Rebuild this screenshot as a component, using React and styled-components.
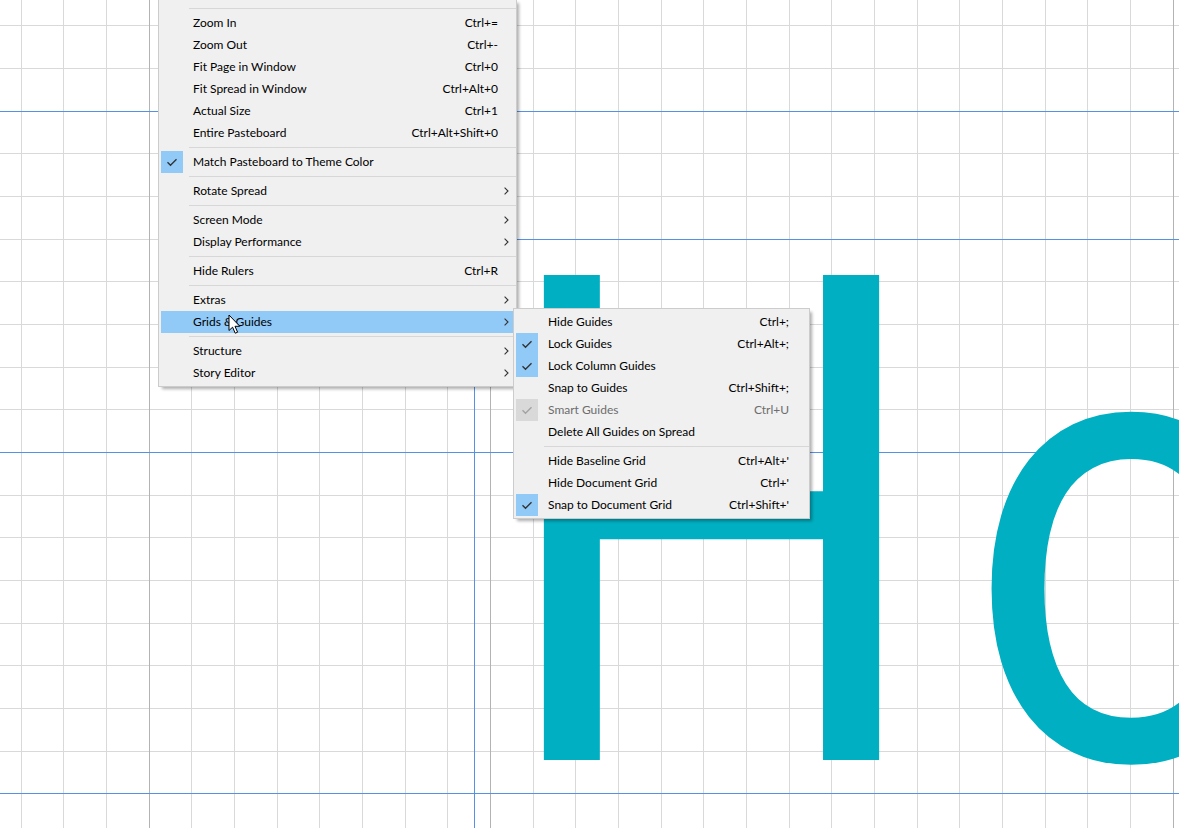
import React from 'react';
import styled, { createGlobalStyle } from 'styled-components';

const GlobalStyle = createGlobalStyle`
  html, body { margin: 0; padding: 0; background: #ffffff; }
  body { overflow: hidden; font-family: "Lato", "Open Sans", sans-serif; }
`;

const Canvas = styled.div`
  position: relative;
  width: 1179px;
  height: 828px;
  overflow: hidden;
  background: #ffffff;
`;

const Drawing = styled.svg`
  position: absolute;
  left: 0;
  top: 0;
`;

const Glyphs = styled.div`
  position: absolute;
  left: ${(p) => p.$x}px;
  top: ${(p) => p.$y}px;
  font-family: "Lato", "Open Sans", sans-serif;
  font-weight: 400;
  font-size: 677px;
  line-height: 1;
  color: #00afc1;
  white-space: nowrap;
  letter-spacing: ${(p) => p.$spacing}px;
  transform: scaleX(${(p) => p.$scale});
  transform-origin: 0 0;
`;

const Menu = styled.div`
  position: absolute;
  left: ${(p) => p.$x}px;
  top: ${(p) => p.$y}px;
  width: ${(p) => p.$w}px;
  box-sizing: border-box;
  background: #f0f0f0;
  border: 1px solid #cccccc;
  padding: ${(p) => p.$padTop}px 2px 2px 2px;
  box-shadow: 3px 3px 3px -1px rgba(0, 0, 0, 0.32);
  font-family: "Lato", "Open Sans", sans-serif;
  font-size: 12px;
  color: #000000;
  z-index: ${(p) => p.$z};
`;

const Item = styled.div`
  display: grid;
  grid-template-columns: 22px 1fr auto ${(p) => p.$arrowCol}px;
  align-items: center;
  height: 22px;
  background: ${(p) => (p.$active ? '#91c9f7' : 'transparent')};
  color: ${(p) => (p.$disabled ? '#6d6d6d' : '#000000')};
`;

const CheckBox = styled.span`
  display: flex;
  align-items: center;
  justify-content: center;
  width: 22px;
  height: 22px;
  background: ${(p) =>
    p.$checked ? (p.$disabled ? '#d9d9d9' : '#91c9f7') : 'transparent'};
`;

const Label = styled.span`
  padding-left: 10px;
  white-space: nowrap;
  line-height: 22px;
`;

const Shortcut = styled.span`
  white-space: nowrap;
  line-height: 22px;
`;

const ArrowCell = styled.span`
  display: flex;
  align-items: center;
  justify-content: center;
  height: 22px;
`;

const Separator = styled.div`
  height: 1px;
  margin: 3px -2px 3px 28px;
  background: #d7d7d7;
`;

const Pointer = styled.svg`
  position: absolute;
  left: 228px;
  top: 314px;
  z-index: 10;
`;

const CheckMark = ({ disabled }) => (
  <svg width="22" height="22" viewBox="0 0 22 22">
    <path
      d="M6.5 11.2 L9.5 14.2 L15.5 8.2"
      fill="none"
      stroke={disabled ? '#a3a3a3' : '#333333'}
      strokeWidth="1.4"
    />
  </svg>
);

const Chevron = () => (
  <svg width="5" height="8" viewBox="0 0 5 8">
    <path d="M0.6 0.6 L4 4 L0.6 7.4" fill="none" stroke="#333333" strokeWidth="1.1" />
  </svg>
);

const viewMenu = [
  { sep: true },
  { label: 'Zoom In', key: 'Ctrl+=' },
  { label: 'Zoom Out', key: 'Ctrl+-' },
  { label: 'Fit Page in Window', key: 'Ctrl+0' },
  { label: 'Fit Spread in Window', key: 'Ctrl+Alt+0' },
  { label: 'Actual Size', key: 'Ctrl+1' },
  { label: 'Entire Pasteboard', key: 'Ctrl+Alt+Shift+0' },
  { sep: true },
  { label: 'Match Pasteboard to Theme Color', checked: true },
  { sep: true },
  { label: 'Rotate Spread', sub: true },
  { sep: true },
  { label: 'Screen Mode', sub: true },
  { label: 'Display Performance', sub: true },
  { sep: true },
  { label: 'Hide Rulers', key: 'Ctrl+R' },
  { sep: true },
  { label: 'Extras', sub: true },
  { label: 'Grids & Guides', sub: true, active: true },
  { sep: true },
  { label: 'Structure', sub: true },
  { label: 'Story Editor', sub: true },
];

const guidesMenu = [
  { label: 'Hide Guides', key: 'Ctrl+;' },
  { label: 'Lock Guides', key: 'Ctrl+Alt+;', checked: true },
  { label: 'Lock Column Guides', checked: true },
  { label: 'Snap to Guides', key: 'Ctrl+Shift+;' },
  { label: 'Smart Guides', key: 'Ctrl+U', checked: true, disabled: true },
  { label: 'Delete All Guides on Spread' },
  { sep: true },
  { label: 'Hide Baseline Grid', key: "Ctrl+Alt+'" },
  { label: 'Hide Document Grid', key: "Ctrl+'" },
  { label: 'Snap to Document Grid', key: "Ctrl+Shift+'", checked: true },
];

const MenuList = ({ items, x, y, w, padTop, arrowCol, z }) => (
  <Menu $x={x} $y={y} $w={w} $padTop={padTop} $z={z}>
    {items.map((it, i) =>
      it.sep ? (
        <Separator key={i} />
      ) : (
        <Item key={i} $arrowCol={arrowCol} $active={it.active} $disabled={it.disabled}>
          <CheckBox $checked={it.checked} $disabled={it.disabled}>
            {it.checked && <CheckMark disabled={it.disabled} />}
          </CheckBox>
          <Label>{it.label}</Label>
          <Shortcut>{it.key || ''}</Shortcut>
          <ArrowCell>{it.sub && <Chevron />}</ArrowCell>
        </Item>
      )
    )}
  </Menu>
);

const W = 1179;
const H = 828;
const STEP = 42.667;
const xs = Array.from({ length: 28 }, (_, k) => Math.round(20.67 + STEP * k) + 0.5);
const ys = Array.from({ length: 20 }, (_, k) => Math.round(25.33 + STEP * k) + 0.5);
const darkCols = [3, 11, 27];

const GridDrawing = () => (
  <Drawing width={W} height={H} viewBox={`0 0 ${W} ${H}`}>
    {ys.map((y) => (
      <line key={'h' + y} x1="0" x2={W} y1={y} y2={y} stroke="#d9d9d9" strokeWidth="1" />
    ))}
    {xs.map((x, k) => (
      <line
        key={'v' + x}
        x1={x}
        x2={x}
        y1="0"
        y2={H}
        stroke={darkCols.includes(k) ? '#b3b3b3' : '#d9d9d9'}
        strokeWidth="1"
      />
    ))}
    <line x1="0" x2={W} y1="111.5" y2="111.5" stroke="#5592e6" strokeWidth="1" />
    <line x1="490" x2={W} y1="239.5" y2="239.5" stroke="#5592e6" strokeWidth="1" />
    <line x1="0" x2={W} y1="452.5" y2="452.5" stroke="#5592e6" strokeWidth="1" />
    <line x1="0" x2={W} y1="793.5" y2="793.5" stroke="#5592e6" strokeWidth="1" />
    <line x1="474.5" x2="474.5" y1="0" y2={H} stroke="#5592e6" strokeWidth="1" />
  </Drawing>
);

export default function App() {
  return (
    <>
      <GlobalStyle />
      <Canvas>
        <GridDrawing />
        <Glyphs $x={491} $y={160} $spacing={52} $scale={0.853}>
          Ho
        </Glyphs>
        <MenuList items={viewMenu} x={158} y={-1} w={359} padTop={5} arrowCol={16} z={2} />
        <MenuList items={guidesMenu} x={513} y={308} w={297} padTop={2} arrowCol={18} z={3} />
        <Pointer width="14" height="22" viewBox="0 0 14 22">
          <path
            d="M1 1 L1 16.5 L4.6 13.2 L7.2 19.2 L9.6 18.2 L7 12.3 L11.8 12.3 Z"
            fill="#ffffff"
            stroke="#000000"
            strokeWidth="1"
            strokeLinejoin="miter"
          />
        </Pointer>
      </Canvas>
    </>
  );
}
